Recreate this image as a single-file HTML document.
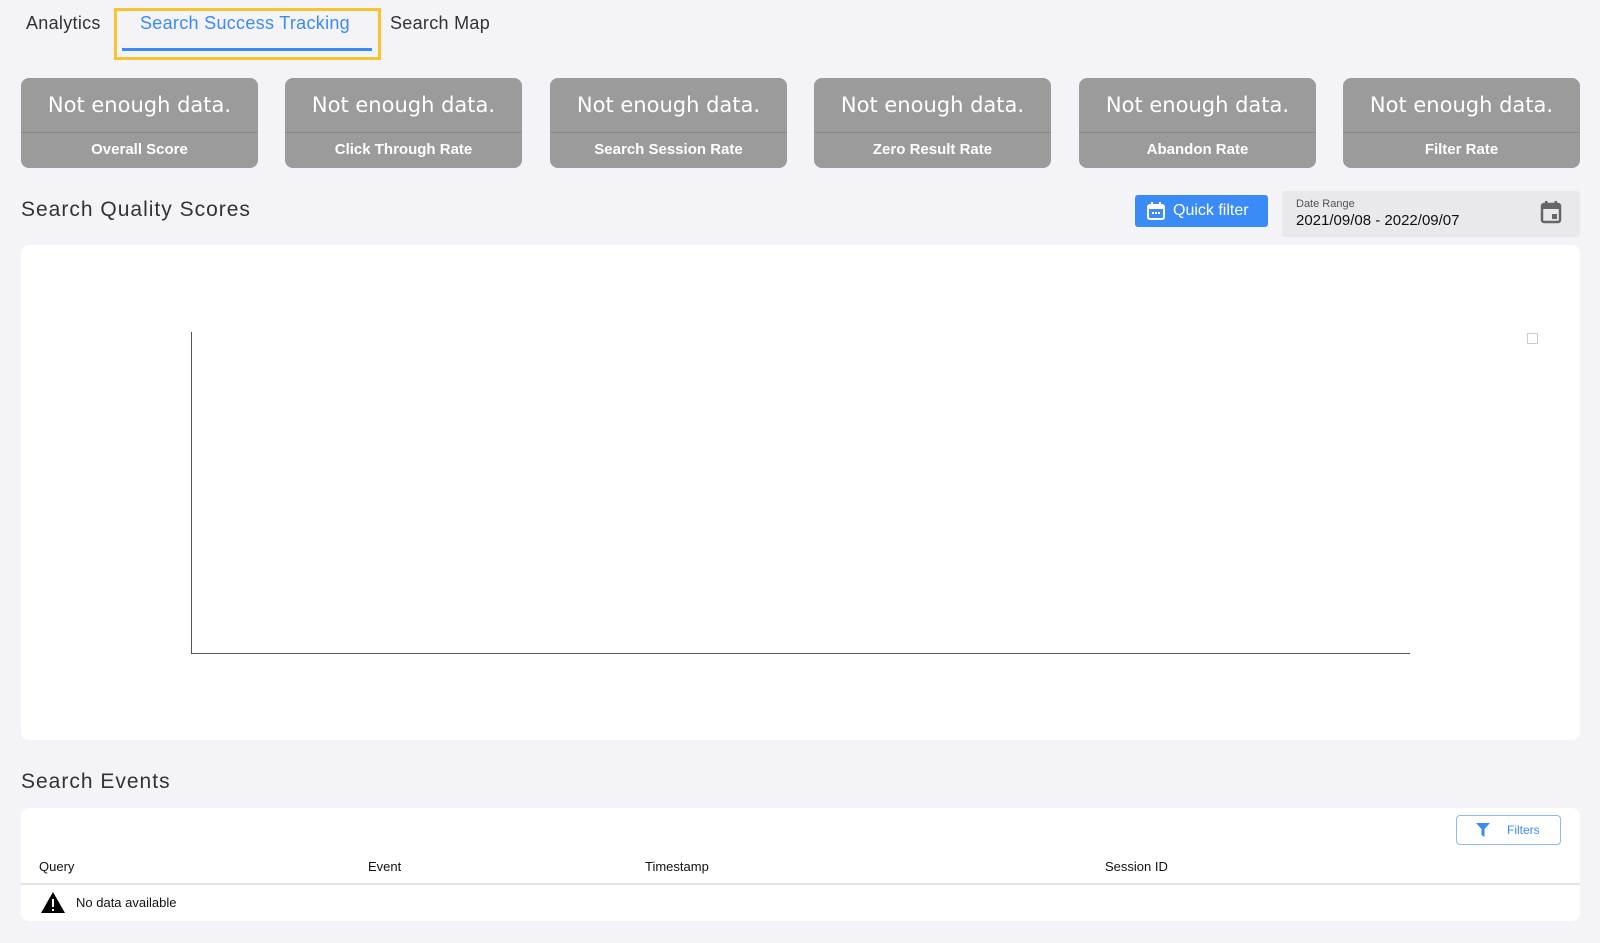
<!DOCTYPE html>
<html><head><style>
*{box-sizing:border-box;margin:0;padding:0}
body{width:1600px;height:943px;background:#f3f3f8;font-family:"Liberation Sans",sans-serif;position:relative;overflow:hidden;color:#222}
.abs{position:absolute}
.tab{position:absolute;top:13px;font-size:18px;color:#333;letter-spacing:.3px}
.card{position:absolute;top:78px;width:237px;height:90px;background:#9b9b9b;border-radius:8px;color:#fff;text-align:center}
.card .v{height:55px;line-height:55px;font-size:21px;font-family:"DejaVu Sans",sans-serif;border-bottom:1px solid #888}
.card .l{height:34px;line-height:34px;font-size:15px;font-weight:bold}
h2{position:absolute;font-size:21px;font-weight:normal;color:#333;letter-spacing:1px}
.th{position:absolute;top:859px;font-size:13px;color:#111}
</style></head><body>
<div class="tab" style="left:26px">Analytics</div>
<div class="abs" style="left:114px;top:8px;width:267px;height:52px;border:3px solid #f7c430"></div>
<div class="tab" style="left:140px;color:#3a8bf5">Search Success Tracking</div>
<div class="abs" style="left:122px;top:48px;width:250px;height:3px;background:#3a8bf5"></div>
<div class="tab" style="left:390px">Search Map</div>

<div class="card" style="left:21px"><div class="v">Not enough data.</div><div class="l">Overall Score</div></div>
<div class="card" style="left:285px"><div class="v">Not enough data.</div><div class="l">Click Through Rate</div></div>
<div class="card" style="left:550px"><div class="v">Not enough data.</div><div class="l">Search Session Rate</div></div>
<div class="card" style="left:814px"><div class="v">Not enough data.</div><div class="l">Zero Result Rate</div></div>
<div class="card" style="left:1079px"><div class="v">Not enough data.</div><div class="l">Abandon Rate</div></div>
<div class="card" style="left:1343px"><div class="v">Not enough data.</div><div class="l">Filter Rate</div></div>

<h2 style="left:21px;top:198px">Search Quality Scores</h2>
<div class="abs" style="left:1135px;top:195px;width:133px;height:32px;background:#3a8bf5;border-radius:3px;color:#fff;font-size:16px;line-height:32px;padding-left:38px">Quick filter</div>
<svg class="abs" style="left:1146px;top:201px" width="20" height="20" viewBox="0 0 20 20"><rect x="2" y="4" width="16" height="14" rx="2" fill="none" stroke="#fff" stroke-width="2"/><rect x="2" y="4" width="16" height="4" fill="#fff"/><rect x="5" y="1" width="2" height="5" fill="#fff"/><rect x="13" y="1" width="2" height="5" fill="#fff"/><rect x="6" y="11" width="2" height="2" fill="#fff"/><rect x="9" y="11" width="2" height="2" fill="#fff"/><rect x="12" y="11" width="2" height="2" fill="#fff"/></svg>
<div class="abs" style="left:1282px;top:191px;width:298px;height:46px;background:#e8e8ed;border-radius:3px"></div>
<div class="abs" style="left:1296px;top:198px;font-size:11px;color:#555">Date Range</div>
<div class="abs" style="left:1296px;top:212px;font-size:15px;color:#111">2021/09/08 - 2022/09/07</div>
<svg class="abs" style="left:1540px;top:200px" width="22" height="24" viewBox="0 0 22 24"><rect x="2" y="4" width="18" height="18" rx="2" fill="none" stroke="#666" stroke-width="2.5"/><rect x="2" y="4" width="18" height="5" fill="#666"/><rect x="5" y="1" width="2.5" height="5" fill="#666"/><rect x="14.5" y="1" width="2.5" height="5" fill="#666"/><rect x="12" y="14" width="5" height="5" fill="#666"/></svg>

<div class="abs" style="left:21px;top:245px;width:1559px;height:495px;background:#fff;border-radius:8px"></div>
<div class="abs" style="left:191px;top:332px;width:1px;height:322px;background:#555"></div>
<div class="abs" style="left:191px;top:653px;width:1219px;height:1px;background:#555"></div>
<div class="abs" style="left:1527px;top:333px;width:11px;height:11px;border:1px solid #ccc"></div>

<h2 style="left:21px;top:770px">Search Events</h2>
<div class="abs" style="left:21px;top:808px;width:1559px;height:113px;background:#fff;border-radius:8px"></div>
<div class="abs" style="left:1456px;top:815px;width:105px;height:30px;border:1px solid #8fb8f5;border-radius:4px;color:#3a8bf5;font-size:12px;line-height:28px;padding-left:50px">Filters</div>
<svg class="abs" style="left:1476px;top:822px" width="14" height="16" viewBox="0 0 14 16"><path d="M0 1h14L8.5 7v8L5.5 13V7z" fill="#3a8bf5"/></svg>
<div class="th" style="left:39px">Query</div>
<div class="th" style="left:368px">Event</div>
<div class="th" style="left:645px">Timestamp</div>
<div class="th" style="left:1105px">Session ID</div>
<div class="abs" style="left:21px;top:883px;width:1559px;height:2px;background:#e4e4e4"></div>
<svg class="abs" style="left:40px;top:891px" width="26" height="23" viewBox="0 0 26 23"><path d="M13 1L25 22H1z" fill="#000"/><rect x="12" y="8" width="2" height="8" fill="#fff"/><rect x="12" y="18" width="2" height="2" fill="#fff"/></svg>
<div class="abs" style="left:76px;top:895px;font-size:13px;color:#111">No data available</div>
</body></html>
